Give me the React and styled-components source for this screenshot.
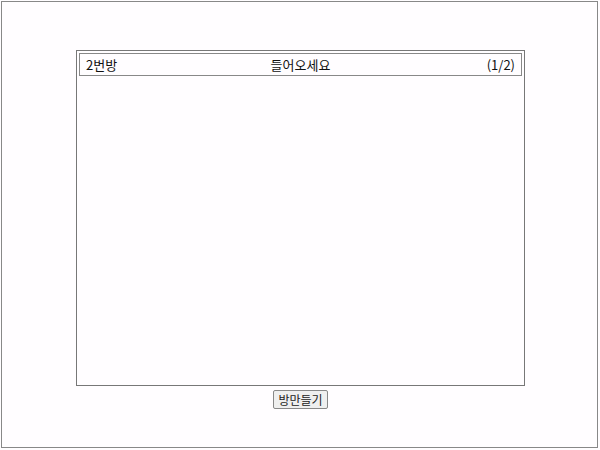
import React from 'react'
import styled, {createGlobalStyle} from 'styled-components'

const Global = createGlobalStyle`
body {
  margin: 0;
  background: #fffdff;
  font-family: "Noto Sans CJK KR", "Noto Sans", sans-serif;
}
`

const Frame = styled.div`
margin: 1px;
width: 597px;
height: 447px;
box-sizing: border-box;
border: 1px solid #888;
padding: 48px 0 0 2px;
display: flex;
flex-direction: column;
align-items: center;
`

const Room = styled.div`
width: 449px;
height: 336px;
box-sizing: border-box;
border: 1px solid #777;
padding: 2px;
`

const Header = styled.div`
height: 23px;
box-sizing: border-box;
border: 1px solid #888;
display: grid;
grid-template-columns: 1fr auto 1fr;
align-items: center;
padding: 0 6px;
font-size: 13px;
color: #111;
`

const Side = styled.span`
text-align: ${props => props.align};
`

const MakeButton = styled.button`
margin-top: 4px;
height: 19px;
padding: 0 4px;
font-family: "Noto Sans CJK KR", sans-serif;
font-size: 12px;
color: #222;
background: #efefef;
border: 1px solid #888;
border-radius: 2px;
line-height: 1;
`

const App = () => {
    return (
        <>
            <Global />
            <Frame>
                <Room>
                    <Header>
                        <Side align="left">2번방</Side>
                        <span>들어오세요</span>
                        <Side align="right">(1/2)</Side>
                    </Header>
                </Room>
                <MakeButton>방만들기</MakeButton>
            </Frame>
        </>
    )
}

export default App
